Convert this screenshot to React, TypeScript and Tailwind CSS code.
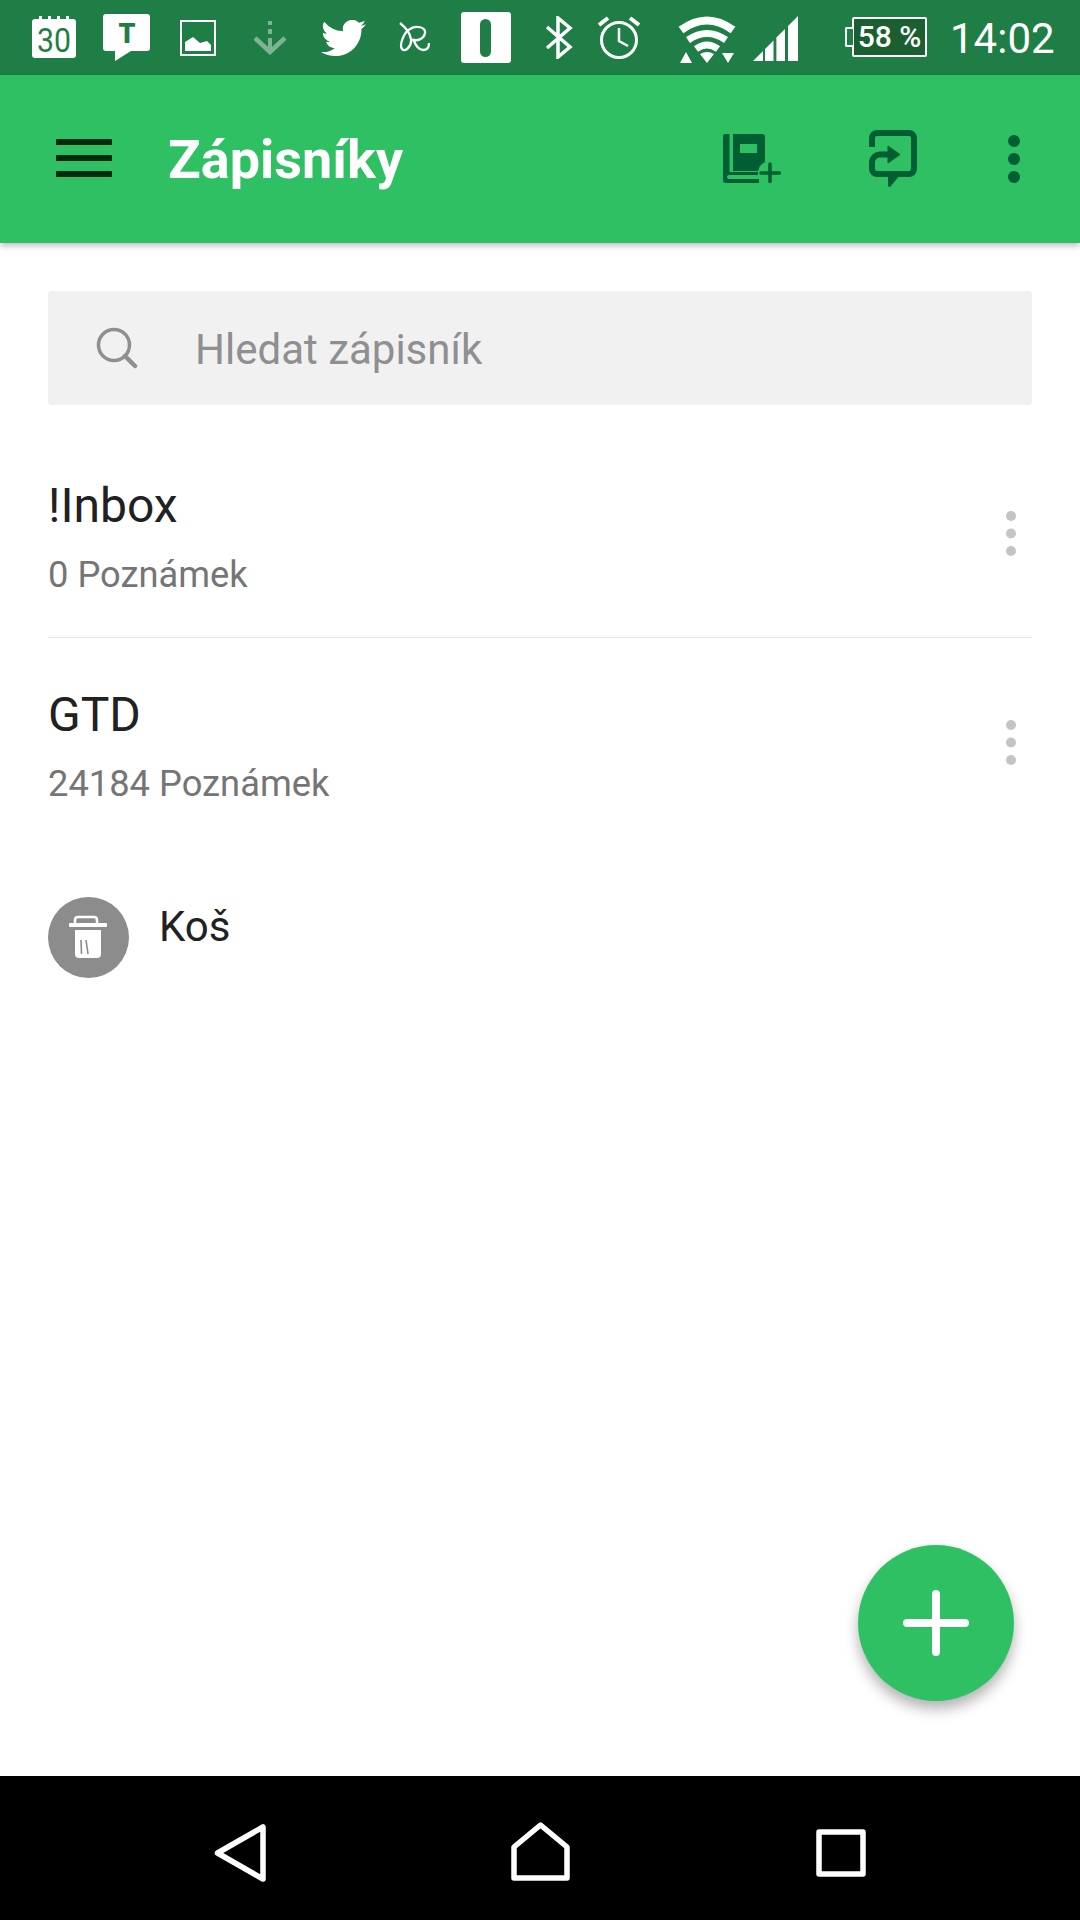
import React from "react";

const SB = "#1f7e45";
const DARK = "#005f32";

function MoreDots({ className, color, r, gap }: { className: string; color: string; r: number; gap: number }) {
  const h = r * 2 + gap * 2;
  return (
    <svg className={className} width={r * 2} height={h} viewBox={`0 0 ${r * 2} ${h}`}>
      <circle cx={r} cy={r} r={r} fill={color} />
      <circle cx={r} cy={r + gap} r={r} fill={color} />
      <circle cx={r} cy={r + gap * 2} r={r} fill={color} />
    </svg>
  );
}

function StatusBar() {
  return (
    <div className="flex h-[75px] shrink-0 items-start bg-[#1f7e45]">
      {/* calendar */}
      <svg className="ml-[32px] mt-[16px]" width="44" height="42" viewBox="0 0 44 42">
        <rect x="0" y="3" width="44" height="39" rx="3" fill="#fff" />
        <rect x="7" y="0" width="3" height="4" fill="#fff" />
        <rect x="16" y="0" width="3" height="4" fill="#fff" />
        <rect x="25" y="0" width="3" height="4" fill="#fff" />
        <rect x="34" y="0" width="3" height="4" fill="#fff" />
        <text x="22" y="36" textAnchor="middle" fontFamily="Roboto, sans-serif" fontWeight="400" fontSize="34" textLength="34" lengthAdjust="spacingAndGlyphs" fill={SB}>30</text>
      </svg>
      {/* T bubble */}
      <svg className="ml-[27px] mt-[14px]" width="47" height="47" viewBox="0 0 47 47">
        <path d="M3 0H44a3 3 0 0 1 3 3V34a3 3 0 0 1-3 3H28L12 47V37H3a3 3 0 0 1-3-3V3a3 3 0 0 1 3-3Z" fill="#fff" />
        <text x="24" y="29" textAnchor="middle" fontFamily="Roboto, sans-serif" fontWeight="900" fontSize="27" fill={SB}>T</text>
      </svg>
      {/* image */}
      <svg className="ml-[30px] mt-[20px]" width="36" height="36" viewBox="0 0 36 36">
        <rect x="1" y="1" width="34" height="34" fill="none" stroke="#fff" strokeWidth="2" />
        <path d="M5 31V22L13 17L20 23L27 21L31 25V31Z" fill="#fff" />
      </svg>
      {/* download */}
      <svg className="ml-[37px] mt-[21px]" width="34" height="34" viewBox="0 0 34 34" opacity="0.42">
        <rect x="15" y="0" width="4" height="4" fill="#fff" />
        <rect x="15" y="8" width="4" height="5" fill="#fff" />
        <rect x="15" y="17" width="4" height="13" fill="#fff" />
        <path d="M2 17L17 31L32 17" fill="none" stroke="#fff" strokeWidth="4.5" />
      </svg>
      {/* twitter */}
      <svg className="ml-[34px] mt-[20px]" width="45" height="36" viewBox="0 0 24 19.5" preserveAspectRatio="none">
        <path fill="#fff" d="M24 2.3a9.8 9.8 0 0 1-2.83.78A4.94 4.94 0 0 0 23.34.36a9.9 9.9 0 0 1-3.13 1.19 4.93 4.93 0 0 0-8.4 4.5A14 14 0 0 1 1.67.9a4.93 4.93 0 0 0 1.52 6.57 4.9 4.9 0 0 1-2.23-.61v.06a4.93 4.93 0 0 0 3.95 4.83 4.9 4.9 0 0 1-2.22.08 4.93 4.93 0 0 0 4.6 3.42A9.9 9.9 0 0 1 0 17.3a14 14 0 0 0 7.55 2.2c9.05 0 14-7.5 14-14v-.64A10 10 0 0 0 24 2.3Z" />
      </svg>
      {/* squiggle */}
      <svg className="ml-[33px] mt-[22px]" width="31" height="30" viewBox="0 0 31 30">
        <path d="M1 1C6 5 11 11 12 17C13 24 6 31 3 27C0 23 5 10 11 7C17 3 27 5 26 11C25 17 17 20 14 17C16 22 19 28 24 28C28 28 30 25 30 21" fill="none" stroke="#fff" strokeWidth="2.3" />
      </svg>
      {/* white tile */}
      <svg className="ml-[31px] mt-[12px]" width="50" height="51" viewBox="0 0 50 51">
        <rect width="50" height="51" rx="3" fill="#fff" />
        <rect x="19" y="7" width="11" height="38" rx="5.5" fill={SB} />
      </svg>
      {/* bluetooth */}
      <svg className="ml-[34px] mt-[16px]" width="28" height="43" viewBox="0 0 28 43">
        <path d="M2 11L25 31L13 41V2L25 12L2 32" fill="none" stroke="#fff" strokeWidth="3.5" />
      </svg>
      {/* alarm */}
      <svg className="ml-[25px] mt-[16px]" width="42" height="43" viewBox="0 0 42 43">
        <circle cx="21" cy="24" r="17.5" fill="none" stroke="#fff" strokeWidth="3" />
        <path d="M21 12V25L30 30" fill="none" stroke="#fff" strokeWidth="2.5" />
        <path d="M1 9L10 2M41 9L32 2" fill="none" stroke="#fff" strokeWidth="4" />
      </svg>
      {/* wifi */}
      <svg className="ml-[38px] mt-[16px]" width="58" height="47" viewBox="0 0 58 47">
        <path d="M3 14Q29 -5 55 14" fill="none" stroke="#fff" strokeWidth="8" />
        <path d="M10 24Q29 11 48 24" fill="none" stroke="#fff" strokeWidth="7" />
        <path d="M18 33Q29 25 40 33" fill="none" stroke="#fff" strokeWidth="7" />
        <path d="M22 38Q29 34 36 38L29 47Z" fill="#fff" />
        <path d="M2 47L8 36L14 47Z" fill="#fff" />
        <path d="M44 37H56L50 47Z" fill="#fff" />
      </svg>
      {/* signal */}
      <svg className="ml-[17px] mt-[16px]" width="45" height="45" viewBox="0 0 45 45">
        <path d="M0 45L10 35V45ZM12 33L20.5 24.5V45H12ZM23.4 21.6L32 13V45H23.4ZM35 10L45 0V45H35Z" fill="#fff" />
      </svg>
      {/* battery */}
      <div className="relative ml-[47px] mt-[17px] flex h-[40px] w-[82px] items-center justify-end">
        <div className="absolute left-0 top-[10px] h-[20px] w-[8px] rounded-l-[2px] border-y-[2px] border-l-[2px] border-white bg-[#1f7e45]" />
        <div className="flex h-[40px] w-[75px] items-center justify-center rounded-[2px] border-[2px] border-white bg-[#1b5e30] text-[30px] font-medium leading-none text-white whitespace-nowrap">
          58 %
        </div>
      </div>
      {/* time */}
      <span className="ml-[23px] mt-[15px] text-[42px] leading-[48px] text-white">14:02</span>
    </div>
  );
}

function Header() {
  return (
    <div className="relative z-10 flex h-[168px] shrink-0 items-start bg-[#2fc064] shadow-[0_3px_6px_rgba(0,0,0,0.25)]">
      <div className="ml-[56px] mt-[64px] flex w-[56px] flex-col gap-[10px]">
        <div className="h-[6px] bg-[#002a10]" />
        <div className="h-[6px] bg-[#002a10]" />
        <div className="h-[6px] bg-[#002a10]" />
      </div>
      <span className="ml-[56px] mt-[53px] text-[54px] font-bold leading-[64px] text-white">Zápisníky</span>
      <div className="ml-auto flex items-start">
        <svg className="mt-[59px]" width="58" height="49" viewBox="0 0 58 49">
          <path d="M0 2a2 2 0 0 1 2-2H6.5V38H0Z" fill={DARK} />
          <path d="M10 0H39a3 3 0 0 1 3 3V37H10Z" fill={DARK} />
          <rect x="17" y="10" width="17" height="9" fill="#2fc064" />
          <path d="M3 38H38V41H6a1.5 1.5 0 0 0 0 4H36V49H3a3 3 0 0 1-3-3V38Z" fill={DARK} />
          <circle cx="47" cy="39" r="12" fill="#2fc064" />
          <path d="M38 39H56.5M47 30V47.5" stroke={DARK} strokeWidth="3.5" strokeLinecap="round" fill="none" />
        </svg>
        <svg className="ml-[88px] mt-[55px]" width="48" height="58" viewBox="0 0 48 58">
          <path d="M3 17V8A5 5 0 0 1 8 3H40A5 5 0 0 1 45 8V39A5 5 0 0 1 40 44H8A5 5 0 0 1 3 39V32A8 8 0 0 1 11 24.5H21" fill="none" stroke={DARK} strokeWidth="6" />
          <path d="M19 16L31 24.5L19 33Z" fill={DARK} stroke={DARK} strokeWidth="1" strokeLinejoin="round" />
          <path d="M19 45H31L21.5 56.5Q19 58 19 55Z" fill={DARK} />
        </svg>
        <MoreDots className="ml-[91px] mr-[60px] mt-[60px]" color={DARK} r={6} gap={18} />
      </div>
    </div>
  );
}

function NoteRow({ title, count, border }: { title: string; count: string; border?: boolean }) {
  return (
    <div className={`relative mx-[48px] flex h-[209px] flex-col pt-[45px] ${border ? "border-b-[1px] border-[#e6e6e6]" : ""}`}>
      <span className="text-[48px] leading-[64px] text-[#212121]">{title}</span>
      <span className="mt-[15px] text-[36.3px] leading-[44px] text-[#757575]">{count}</span>
      <MoreDots className="absolute right-[16px] top-[82px]" color="#c4c4c4" r={5} gap={17.5} />
    </div>
  );
}

export default function App() {
  return (
    <div className="flex h-[1920px] w-[1080px] flex-col overflow-hidden bg-white font-['Roboto',sans-serif]">
      <StatusBar />
      <Header />
      <div className="relative flex flex-1 flex-col">
        <div className="mx-[48px] mt-[48px] flex h-[114px] shrink-0 items-center rounded-[4px] bg-[#f1f1f1]">
          <svg className="ml-[48px]" width="42" height="42" viewBox="0 0 42 42">
            <circle cx="18" cy="18" r="15.5" fill="none" stroke="#8f8f8f" strokeWidth="3.5" />
            <path d="M29 29L39 39" stroke="#8f8f8f" strokeWidth="4.5" strokeLinecap="round" />
          </svg>
          <span className="ml-[57px] mt-[3px] text-[42px] leading-[50px] text-[#8f8f8f]">Hledat zápisník</span>
        </div>
        <div className="mt-[24px]">
          <NoteRow title="!Inbox" count="0 Poznámek" border />
          <NoteRow title="GTD" count="24184 Poznámek" />
        </div>
        <div className="ml-[48px] mt-[50px] flex items-start">
          <div className="flex h-[81px] w-[81px] items-center justify-center rounded-full bg-[#8c8c8c]">
            <svg width="81" height="81" viewBox="0 0 81 81">
              <path d="M27 26V23Q27 20 30 20H46Q49 20 49 23V26" fill="none" stroke="#fff" strokeWidth="2.5" />
              <rect x="21" y="26" width="38" height="4" rx="1" fill="#fff" />
              <path d="M27 33H53V57Q53 61 49 61H31Q27 61 27 57Z" fill="#fff" />
              <path d="M33 43L33.5 57M38 43L40 57" stroke="#8c8c8c" strokeWidth="1.6" />
            </svg>
          </div>
          <span className="ml-[30px] mt-[5px] text-[42px] leading-[50px] text-[#212121]">Koš</span>
        </div>
        <button className="absolute bottom-[75px] right-[66px] flex h-[156px] w-[156px] items-center justify-center rounded-full bg-[#2fc064] shadow-[0_8px_14px_rgba(0,0,0,0.3)]">
          <svg width="66" height="66" viewBox="0 0 66 66">
            <path d="M4 33H62M33 4V62" stroke="#fff" strokeWidth="8" strokeLinecap="round" />
          </svg>
        </button>
      </div>
      <div className="flex h-[144px] shrink-0 items-start bg-black">
        <svg className="ml-[214px] mt-[48px]" width="53" height="58" viewBox="0 0 53 58">
          <path d="M3.5 29L49 3V55Z" fill="none" stroke="#fff" strokeWidth="5.5" strokeLinejoin="round" />
        </svg>
        <svg className="ml-[244px] mt-[46px]" width="59" height="59" viewBox="0 0 59 59">
          <path d="M3 56V25L29.5 3L56 25V56Z" fill="none" stroke="#fff" strokeWidth="5.5" strokeLinejoin="round" />
        </svg>
        <svg className="ml-[246px] mt-[53px]" width="50" height="48" viewBox="0 0 50 48">
          <rect x="3" y="3" width="44" height="42" fill="none" stroke="#fff" strokeWidth="5.5" strokeLinejoin="round" />
        </svg>
      </div>
    </div>
  );
}
